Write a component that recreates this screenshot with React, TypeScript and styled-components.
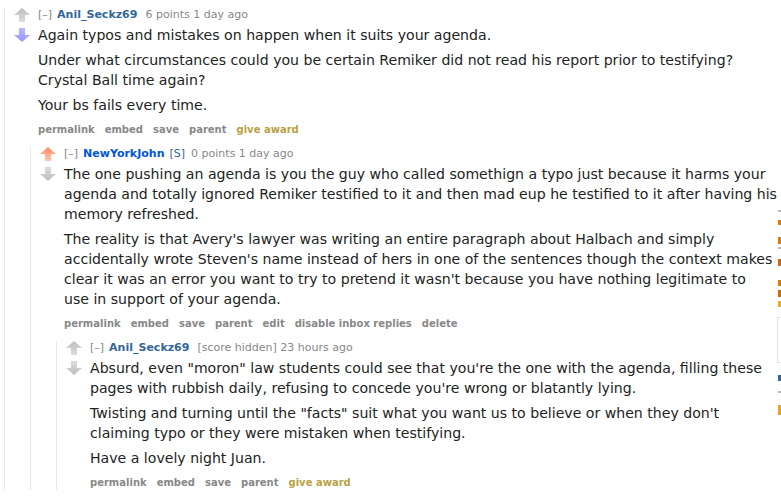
import React from 'react';
import styled, { createGlobalStyle } from 'styled-components';

type Vote = 'up' | 'down' | 'none';

interface CommentData {
  author: string;
  submitter?: boolean;
  score: string;
  time: string;
  vote: Vote;
  paragraphs: string[];
  buttons: string[];
  award?: boolean;
  replies?: CommentData[];
}

const thread: CommentData = {
  author: 'Anil_Seckz69',
  score: '6 points',
  time: '1 day ago',
  vote: 'down',
  paragraphs: [
    'Again typos and mistakes on happen when it suits your agenda.',
    'Under what circumstances could you be certain Remiker did not read his report prior to testifying? Crystal Ball time again?',
    'Your bs fails every time.',
  ],
  buttons: ['permalink', 'embed', 'save', 'parent'],
  award: true,
  replies: [
    {
      author: 'NewYorkJohn',
      submitter: true,
      score: '0 points',
      time: '1 day ago',
      vote: 'up',
      paragraphs: [
        'The one pushing an agenda is you the guy who called somethign a typo just because it harms your agenda and totally ignored Remiker testified to it and then mad eup he testified to it after having his memory refreshed.',
        "The reality is that Avery's lawyer was writing an entire paragraph about Halbach and simply accidentally wrote Steven's name instead of hers in one of the sentences though the context makes clear it was an error you want to try to pretend it wasn't because you have nothing legitimate to\nuse in support of your agenda.",
      ],
      buttons: ['permalink', 'embed', 'save', 'parent', 'edit', 'disable inbox replies', 'delete'],
      replies: [
        {
          author: 'Anil_Seckz69',
          score: '[score hidden]',
          time: '23 hours ago',
          vote: 'none',
          paragraphs: [
            'Absurd, even "moron" law students could see that you\'re the one with the agenda, filling these pages with rubbish daily, refusing to concede you\'re wrong or blatantly lying.',
            'Twisting and turning until the "facts" suit what you want us to believe or when they don\'t claiming typo or they were mistaken when testifying.',
            'Have a lovely night Juan.',
          ],
          buttons: ['permalink', 'embed', 'save', 'parent'],
          award: true,
        },
      ],
    },
  ],
};

// clipped bits of the sidebar showing at the right edge
const sideBits: { c: string; h: number; gap: number }[] = [
  { c: '#bbb', h: 2, gap: 8 },
  { c: '#e07b00', h: 5, gap: 12 },
  { c: '#e07b00', h: 7, gap: 3 },
  { c: '#bbb', h: 2, gap: 10 },
  { c: '#d06a00', h: 7, gap: 14 },
  { c: '#e07b00', h: 6, gap: 4 },
  { c: '#d06a00', h: 7, gap: 4 },
  { c: '#f0b000', h: 6, gap: 8 },
];

const GlobalStyle = createGlobalStyle`
  html, body {
    margin: 0;
    padding: 0;
    background: #fff;
    overflow: hidden;
  }
  body {
    font-family: "DejaVu Sans", Verdana, sans-serif;
    color: #222;
  }
`;

const Page = styled.div`
  display: flex;
  width: 781px;
  height: 497px;
  overflow: hidden;
`;

const Main = styled.div`
  flex: 0 0 777px;
  padding: 8px 0 0 4px;
  box-sizing: border-box;
`;

const Side = styled.div`
  flex: 1;
  padding: 210px 0 0 1px;
  overflow: hidden;
  display: flex;
  flex-direction: column;
`;

const SideBit = styled.div<{ $c: string; $h: number; $gap: number }>`
  width: 3px;
  height: ${(p) => p.$h}px;
  background: ${(p) => p.$c};
  margin-bottom: ${(p) => p.$gap}px;
`;

const SideBox = styled.div`
  width: 40px;
  height: 44px;
  border: 1px solid #e4e4e4;
  margin: 2px 0 12px -1px;
`;

const CommentBox = styled.div`
  border-left: 1px solid #e8e8e8;
  padding-left: 9px;
`;

const Row = styled.div`
  display: flex;
`;

const Midcol = styled.div`
  width: 16px;
  margin-right: 8px;
  display: flex;
  flex-direction: column;
  gap: 6px;
  flex-shrink: 0;
`;

const Entry = styled.div`
  flex: 1;
  min-width: 0;
`;

const Tagline = styled.div`
  font-size: 11px;
  line-height: 14px;
  color: #888;
  margin-bottom: 3px;
  white-space: nowrap;
`;

const Expand = styled.span`
  color: #888;
  margin-right: 5px;
`;

const Author = styled.span<{ $submitter?: boolean }>`
  font-weight: bold;
  color: ${(p) => (p.$submitter ? '#0055df' : '#336699')};
  margin-right: 5px;
`;

const Submitter = styled.span`
  color: #336699;
  margin-right: 3px;
`;

const Score = styled.span`
  margin-left: 3px;
`;

const Body = styled.div`
  font-size: 14.1px;
  line-height: 20px;
  color: #222;
`;

const Para = styled.p`
  margin: 0 0 5px;
  white-space: pre-line;
`;

const Buttons = styled.ul`
  list-style: none;
  display: flex;
  gap: 10px;
  margin: 0;
  padding: 3px 0 0;
  font-size: 10px;
  line-height: 14px;
  font-weight: bold;
`;

const Btn = styled.li<{ $award?: boolean }>`
  color: ${(p) => (p.$award ? '#b8a244' : '#888')};
  white-space: nowrap;
`;

const Children = styled.div`
  margin: 10px 0 0 16px;
`;

const palette: Record<string, [string, string]> = {
  gray: ['#bdbdbd', '#dcdcdc'],
  up: ['#ff8b60', '#ffc7ad'],
  down: ['#9494ff', '#b8b8ff'],
};

function Arrow({ dir, tone }: { dir: 'up' | 'down'; tone: string }) {
  const [a, b] = palette[tone];
  const id = `g-${dir}-${tone}`;
  return (
    <svg width="16" height="14" viewBox="0 0 16 14">
      <defs>
        <linearGradient id={id} x1="0" y1={dir === 'up' ? '0' : '1'} x2="0" y2={dir === 'up' ? '1' : '0'}>
          <stop offset="0" stopColor={a} />
          <stop offset="1" stopColor={b} />
        </linearGradient>
      </defs>
      <polygon
        points={dir === 'up' ? '8,0 16,7 11,7 11,14 5,14 5,7 0,7' : '8,14 16,7 11,7 11,0 5,0 5,7 0,7'}
        fill={`url(#${id})`}
      />
    </svg>
  );
}

function Comment({ data }: { data: CommentData }) {
  return (
    <CommentBox>
      <Row>
        <Midcol>
          <Arrow dir="up" tone={data.vote === 'up' ? 'up' : 'gray'} />
          <Arrow dir="down" tone={data.vote === 'down' ? 'down' : 'gray'} />
        </Midcol>
        <Entry>
          <Tagline>
            <Expand>[–]</Expand>
            <Author $submitter={data.submitter}>{data.author}</Author>
            {data.submitter && <Submitter>[S]</Submitter>}
            <Score>{data.score}</Score> {data.time}
          </Tagline>
          <Body>
            {data.paragraphs.map((t, i) => (
              <Para key={i}>{t}</Para>
            ))}
          </Body>
          <Buttons>
            {data.buttons.map((b) => (
              <Btn key={b}>{b}</Btn>
            ))}
            {data.award && <Btn $award>give award</Btn>}
          </Buttons>
        </Entry>
      </Row>
      {data.replies && (
        <Children>
          {data.replies.map((r, i) => (
            <Comment key={i} data={r} />
          ))}
        </Children>
      )}
    </CommentBox>
  );
}

export default function App() {
  return (
    <Page>
      <GlobalStyle />
      <Main>
        <Comment data={thread} />
      </Main>
      <Side>
        {sideBits.map((b, i) => (
          <SideBit key={i} $c={b.c} $h={b.h} $gap={b.gap} />
        ))}
        <SideBox />
        <SideBit $c="#336699" $h={6} $gap={10} />
        <SideBit $c="#bbb" $h={2} $gap={12} />
        <SideBit $c="#f0a020" $h={10} $gap={0} />
      </Side>
    </Page>
  );
}
